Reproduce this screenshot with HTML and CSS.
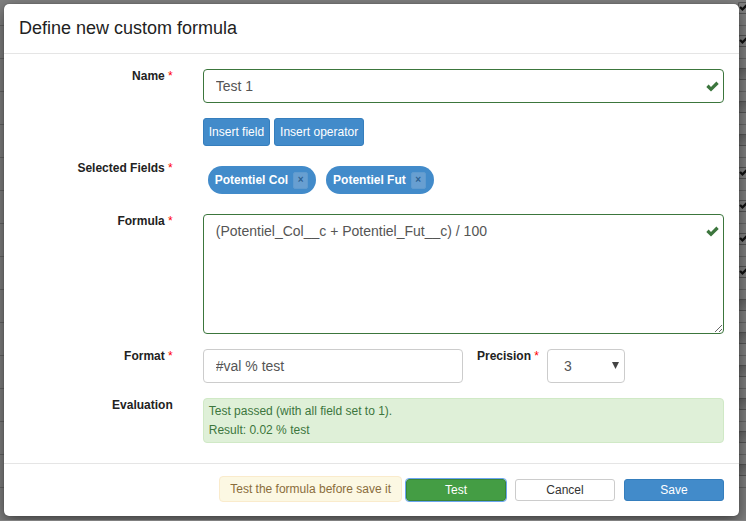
FILE: index.html
```html
<!DOCTYPE html>
<html lang="en">
<head>
<meta charset="utf-8">
<meta name="viewport" content="width=device-width, initial-scale=1">
<title>Define new custom formula</title>
<link rel="stylesheet" href="styles.css">
</head>
<body>
<svg class="symbols" aria-hidden="true">
  <symbol id="check" viewBox="0 0 13 11"><path d="M0.3 5.9 2.6 3.6 5 6 10.4 0.6 12.7 2.9 5 10.6Z"/></symbol>
</svg>
<div class="backdrop" aria-hidden="true">
  <div class="line"><span class="box"><svg><use href="#check"/></svg></span></div>
  <div class="line"><span class="box"><svg><use href="#check"/></svg></span></div>
  <div class="line"><span class="box empty"></span></div>
  <div class="line"><span class="box empty"></span></div>
  <div class="line"><span class="box empty"></span></div>
  <div class="line"><span class="box"><svg><use href="#check"/></svg></span></div>
  <div class="line"><span class="box"><svg><use href="#check"/></svg></span></div>
  <div class="line"><span class="box"><svg><use href="#check"/></svg></span></div>
  <div class="line"><span class="box"><svg><use href="#check"/></svg></span></div>
  <div class="line"><span class="box empty"></span></div>
  <div class="line"><span class="box empty"></span></div>
  <div class="line"><span class="box empty"></span></div>
  <div class="line"><span class="box empty"></span></div>
  <div class="line"><span class="box empty"></span></div>
  <div class="line"><span class="box empty"></span></div>
</div>
<form class="dialog" role="dialog" aria-labelledby="title">
  <header class="header"><h1 id="title">Define new custom formula</h1></header>
  <div class="body">
    <div class="row">
      <label class="label" for="name">Name <span class="req">*</span></label>
      <div class="field valid">
        <input class="control" id="name" type="text" value="Test 1">
        <svg class="tick"><use href="#check"/></svg>
      </div>
    </div>
    <div class="row">
      <div class="field inserts">
        <button class="btn primary insert" type="button">Insert field</button>
        <button class="btn primary insert" type="button">Insert operator</button>
      </div>
    </div>
    <div class="row">
      <span class="label">Selected Fields <span class="req">*</span></span>
      <div class="field tags">
        <span class="tag">Potentiel Col <button class="remove" type="button">×</button></span>
        <span class="tag">Potentiel Fut <button class="remove" type="button">×</button></span>
      </div>
    </div>
    <div class="row">
      <label class="label" for="formula">Formula <span class="req">*</span></label>
      <div class="field valid">
        <textarea class="control" id="formula">(Potentiel_Col__c + Potentiel_Fut__c) / 100</textarea>
        <svg class="tick"><use href="#check"/></svg>
      </div>
    </div>
    <div class="row">
      <label class="label" for="format">Format <span class="req">*</span></label>
      <div class="field split">
        <input class="control" id="format" type="text" value="#val % test">
        <label class="label" for="precision">Precision <span class="req">*</span></label>
        <div class="picker">
          <select class="control" id="precision"><option>3</option></select>
          <svg class="arrow" viewBox="0 0 7 7"><path d="M0 0H7L3.5 7Z"/></svg>
        </div>
      </div>
    </div>
    <div class="row">
      <span class="label">Evaluation</span>
      <div class="field">
        <output class="result">Test passed (with all field set to 1).<br>Result: 0.02 % test</output>
      </div>
    </div>
  </div>
  <footer class="footer">
    <span class="notice">Test the formula before save it</span>
    <button class="btn success" type="button">Test</button>
    <button class="btn" type="button">Cancel</button>
    <button class="btn primary" type="button">Save</button>
  </footer>
</form>
</body>
</html>
```
FILE: styles.css
```css
* { box-sizing: border-box; }
body {
  margin: 0;
  padding: 4px 7px 4px 4px;
  background: #808080;
  color: #222;
  font: 12px/14px "Liberation Sans", Arial, sans-serif;
}
button, input, select, textarea { font: inherit; margin: 0; }
.symbols { position: absolute; width: 0; height: 0; }

.backdrop { position: absolute; inset: 0; overflow: hidden; }
.line {
  display: flex;
  justify-content: flex-end;
  height: 33px;
  padding-top: 9px;
  border-bottom: 1px solid #666;
}
.line:first-child { height: 26px; padding-top: 2px; }
.box {
  width: 8px;
  height: 12px;
  border: 1px solid #555;
  border-right: 0;
  border-radius: 2px 0 0 2px;
  overflow: hidden;
}
.box svg { display: block; width: 9px; height: 9px; fill: #111; }
.empty { background: linear-gradient(#666, #787878); }

.dialog {
  position: relative;
  background: #fff;
  border-radius: 5px;
  box-shadow: 0 0 1px #333, 0 5px 15px rgba(0, 0, 0, .5);
}
.header { padding: 12px 15px 13px; border-bottom: 1px solid #e5e5e5; }
h1 { margin: 0; font-size: 18px; line-height: 24px; font-weight: 400; }
.body { display: grid; gap: 15px; padding: 15px 0 20px; }
.row { display: grid; grid-template-columns: 25% 75%; }
.label { font-weight: 700; }
.row > .label { padding-right: 15px; text-align: right; }
.req { color: #f00; font-weight: 400; }
.field { grid-column: 2; min-width: 0; padding: 0 15px; }
.valid, .picker { position: relative; }
.control {
  display: block;
  width: 100%;
  height: 34px;
  padding: 6px 12px;
  border: 1px solid #ccc;
  border-radius: 4px;
  background: #fff;
  color: #555;
  font-size: 14px;
  line-height: 20px;
}
.valid .control { border-color: #3c763d; }
textarea.control { height: 120px; resize: both; }
.tick {
  position: absolute;
  top: 12px;
  right: 20px;
  width: 13px;
  height: 11px;
  fill: #3c763d;
}
.inserts { display: flex; gap: 4px; }
.btn {
  width: 100px;
  height: 22px;
  padding: 0 5px;
  border: 1px solid #ccc;
  border-radius: 3px;
  background: #fff;
  color: #333;
  white-space: nowrap;
}
.btn.primary { background: #428bca; border-color: #357ebd; color: #fff; }
.btn.success { background: #449d44; border-color: #398439; color: #fff; outline: 1px solid #6ba5f0; }
.btn.insert { width: auto; height: 28px; }
.tags { display: flex; flex-wrap: wrap; }
.tag {
  display: flex;
  align-items: center;
  gap: 5px;
  height: 28px;
  margin: 5px;
  padding: 0 8px 0 7px;
  border-radius: 14px;
  background: #428bca;
  color: #fff;
  font-weight: 700;
}
.remove {
  width: 15px;
  height: 17px;
  padding: 0;
  border: 1px solid #5f9bcf;
  border-radius: 2px;
  background: #689fd1;
  color: #2d6293;
  font-size: 10px;
  line-height: 14px;
}
.split { display: grid; grid-template-columns: 1fr 84px 78px; padding-right: 114px; }
.split > .label { padding-right: 8px; text-align: right; }
select.control { appearance: none; padding-left: 16px; }
.arrow {
  position: absolute;
  top: 13px;
  right: 6px;
  width: 7px;
  height: 7px;
  fill: #444;
  pointer-events: none;
}
.result {
  display: block;
  padding: 3px 5px 2px;
  border: 1px solid #d0e9c6;
  border-radius: 4px;
  background: #dff0d8;
  color: #3c763d;
  line-height: 19px;
}
.footer {
  display: flex;
  flex-wrap: wrap;
  align-items: center;
  justify-content: flex-end;
  gap: 9px;
  padding: 12px 15px;
  border-top: 1px solid #e5e5e5;
}
.notice {
  margin: 0 -5px 2px 0;
  padding: 5px 10px;
  border: 1px solid #faebcc;
  border-radius: 4px;
  background: #fcf8e3;
  color: #8a6d3b;
}
```
